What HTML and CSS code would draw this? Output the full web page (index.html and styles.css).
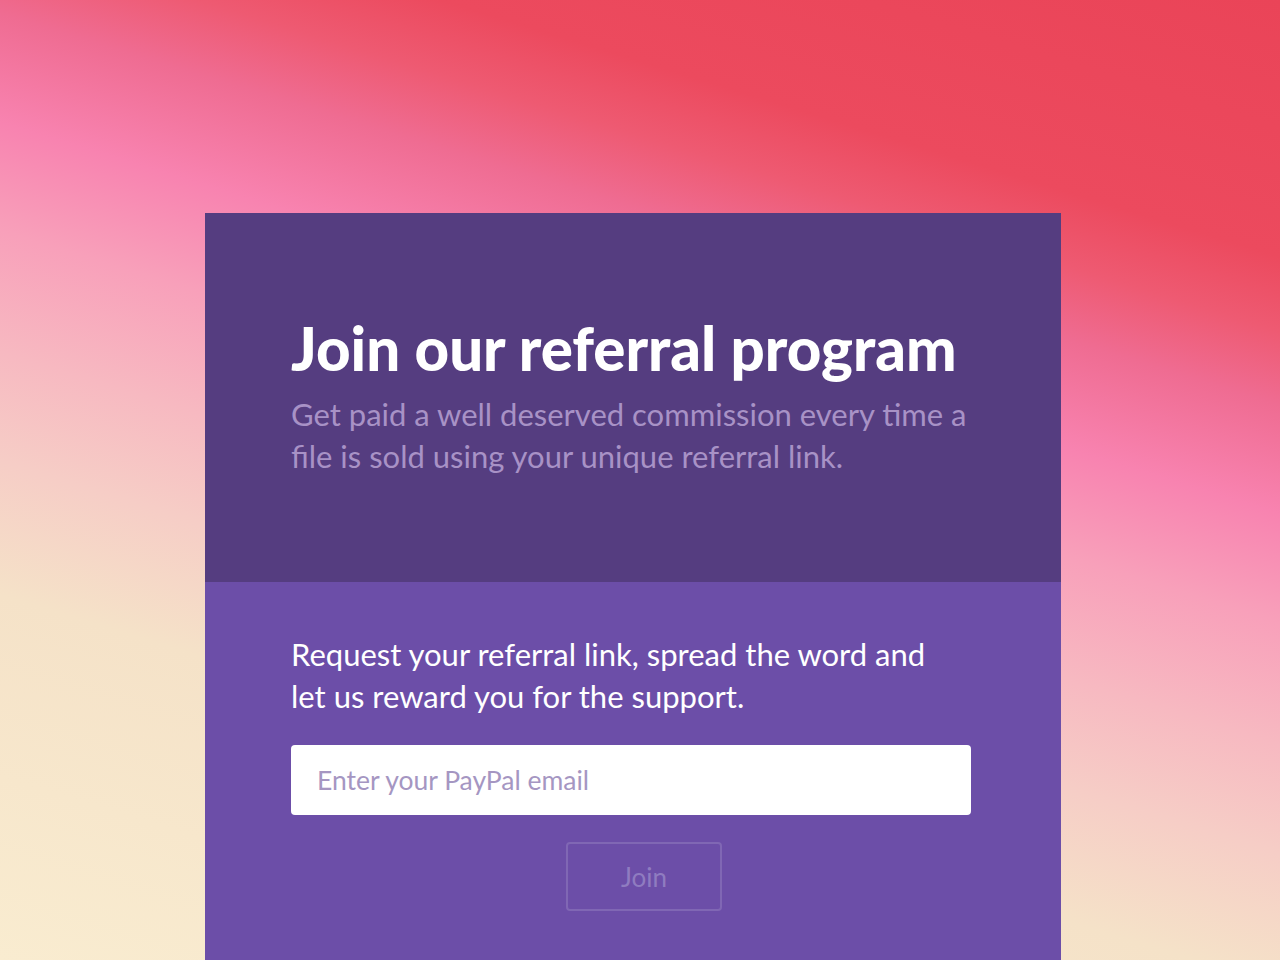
FILE: index.html
```html
<!DOCTYPE html>
<html>
<head>
<meta charset="utf-8">
<link rel="stylesheet" href="styles.css">
</head>
<body>
<div class="page">
  <div class="card">
    <section class="intro">
      <h1 class="title">Join our referral program</h1>
      <p class="lead">Get paid a well deserved commission every time a file is sold using your unique referral link.</p>
    </section>
    <section class="form">
      <p class="pitch">Request your referral link, spread the word and let us reward you for the support.</p>
      <input class="email" type="text" placeholder="Enter your PayPal email">
      <button class="join">Join</button>
    </section>
  </div>
</div>
</body>
</html>
```
FILE: styles.css
```css
html, body {
  margin: 0;
  padding: 0;
  height: 100%;
  overflow: hidden;
}
body {
  font-family: Lato, "Open Sans", sans-serif;
}
.page {
  width: 1280px;
  height: 960px;
  background: linear-gradient(197deg,
    #ea4458 0%,
    #ec4a5e 19%,
    #ee5a72 24.5%,
    #ef6c92 30%,
    #f883b0 38%,
    #f8a0ba 46%,
    #f7b9c1 55%,
    #f6cdc6 63%,
    #f5e2c8 73%,
    #f9ecd0 100%);
  padding-top: 213px;
  box-sizing: border-box;
}
.card {
  width: 856px;
  margin-left: 205px;
}
.intro {
  background: #553d80;
  height: 369px;
  box-sizing: border-box;
  padding: 99px 86px 0 86px;
}
.title {
  margin: 0;
  color: #ffffff;
  font-weight: 900;
  font-size: 60px;
  line-height: 72px;
}
.lead {
  margin: 9px 0 0 0;
  color: #a892c6;
  font-size: 31px;
  line-height: 42px;
}
.form {
  background: #6c4ea8;
  height: 378px;
  box-sizing: border-box;
  padding: 51px 90px 0 86px;
  display: flex;
  flex-direction: column;
}
.pitch {
  margin: 0;
  max-width: 660px;
  color: #ffffff;
  font-size: 31px;
  line-height: 42px;
}
.email {
  margin-top: 28px;
  height: 70px;
  flex: none;
  box-sizing: border-box;
  border: none;
  border-radius: 4px;
  background: #ffffff;
  padding: 0 26px;
  font-family: Lato, sans-serif;
  font-size: 26.5px;
  color: #333;
  outline: none;
}
.email::placeholder {
  color: #a596c2;
}
.join {
  align-self: flex-start;
  flex: none;
  margin: 27px 0 0 275px;
  width: 156px;
  height: 69px;
  box-sizing: border-box;
  background: transparent;
  border: 2px solid rgba(255,255,255,0.14);
  border-radius: 4px;
  color: #8f7cc0;
  font-family: Lato, sans-serif;
  font-size: 26px;
}
```
